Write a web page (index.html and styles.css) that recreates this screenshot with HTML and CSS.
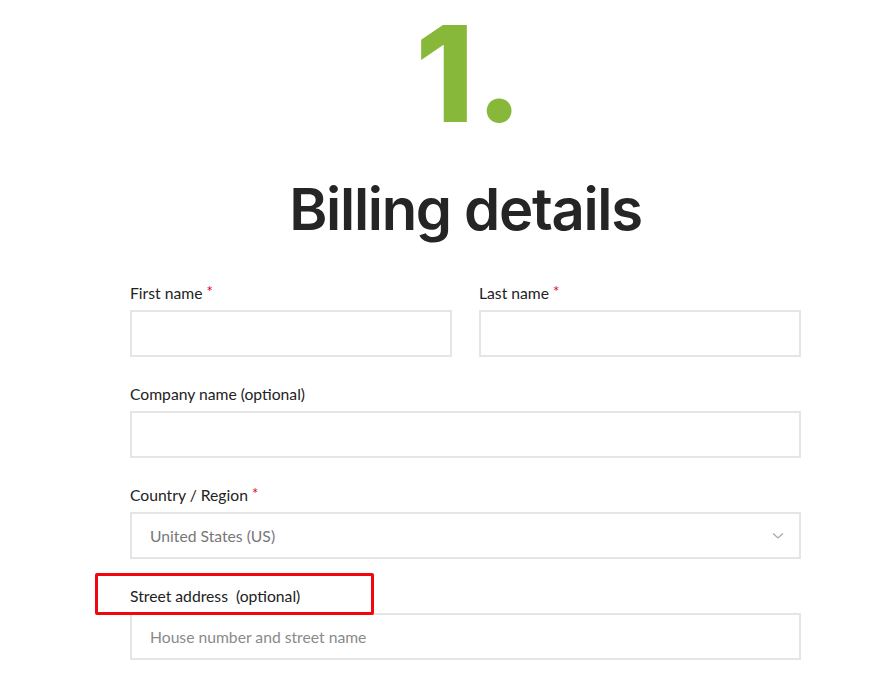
FILE: index.html
```html
<!DOCTYPE html>
<html lang="en">
<head>
    <meta charset="UTF-8">
    <meta name="viewport" content="width=device-width, initial-scale=1.0">
    <title>Checkout - Billing details</title>
    <link rel="stylesheet" href="styles.css">
</head>
<body>
    <main class="checkout">
        <div class="step-number">1.</div>
        <h2 class="section-title">Billing details</h2>

        <form class="billing-form">
            <div class="field-row two-col">
                <p class="field">
                    <label for="first-name">First name <abbr class="required" title="required">*</abbr></label>
                    <input type="text" id="first-name">
                </p>
                <p class="field">
                    <label for="last-name">Last name <abbr class="required" title="required">*</abbr></label>
                    <input type="text" id="last-name">
                </p>
            </div>

            <p class="field">
                <label for="company">Company name (optional)</label>
                <input type="text" id="company">
            </p>

            <p class="field">
                <label for="country">Country / Region <abbr class="required" title="required">*</abbr></label>
                <span class="select-wrap">
                    <select id="country">
                        <option value="US">United States (US)</option>
                    </select>
                    <svg class="chevron" width="12" height="8" viewBox="0 0 12 8"><path d="M1 1.5l5 4.5 5-4.5" fill="none" stroke="#aaa" stroke-width="1.3"/></svg>
                </span>
            </p>

            <p class="field">
                <label for="street" class="highlighted">Street address&nbsp; (optional)<span class="mark-box"></span></label>
                <input type="text" id="street" placeholder="House number and street name">
            </p>
        </form>
    </main>
</body>
</html>
```

FILE: styles.css
```css
* {
    margin: 0;
    padding: 0;
    box-sizing: border-box;
}
body {
    font-family: Lato, "Liberation Sans", sans-serif;
    background: #fff;
    color: #222;
}
.checkout {
    width: 671px;
    margin-left: 130px;
}
.step-number {
    text-align: center;
    font-family: Inter, "Liberation Sans", sans-serif;
    font-weight: 800;
    font-size: 134px;
    line-height: 164px;
    margin-top: -9px;
    margin-bottom: -9px;
    padding-left: 8px;
    color: #87b83a;
    letter-spacing: 1px;
}
.section-title {
    text-align: center;
    font-family: Inter, "Liberation Sans", sans-serif;
    font-weight: 600;
    font-size: 58px;
    line-height: 70px;
    letter-spacing: -1.3px;
    color: #252525;
    margin-top: 28px;
    margin-bottom: 34px;
}
.billing-form {
    display: flex;
    flex-direction: column;
}
.two-col {
    display: grid;
    grid-template-columns: 1fr 1fr;
    column-gap: 27px;
}
.field {
    display: flex;
    flex-direction: column;
    margin-bottom: 22px;
}
.field label {
    font-size: 15.7px;
    line-height: 26px;
    padding-top: 2px;
    margin-bottom: 4px;
    color: #222;
}
.required {
    color: #e2001a;
    text-decoration: none;
    border: none;
    font-size: 15px;
    vertical-align: top;
    position: relative;
    top: -2px;
}
input, select {
    width: 100%;
    height: 47px;
    border: 2px solid #e5e5e5;
    background: #fff;
    font-family: Lato, "Liberation Sans", sans-serif;
    font-size: 15.7px;
    color: #777;
    padding: 0 18px;
    outline: none;
    border-radius: 0;
}
input::placeholder {
    color: #8a8a8a;
}
.select-wrap {
    position: relative;
    display: block;
}
select {
    appearance: none;
    -webkit-appearance: none;
}
.chevron {
    position: absolute;
    right: 17px;
    top: 20px;
    pointer-events: none;
}
.highlighted {
    position: relative;
}
.mark-box {
    position: absolute;
    left: -35px;
    top: -8px;
    width: 279px;
    height: 42px;
    border: 3px solid #f2050d;
    border-radius: 2px;
}
```
